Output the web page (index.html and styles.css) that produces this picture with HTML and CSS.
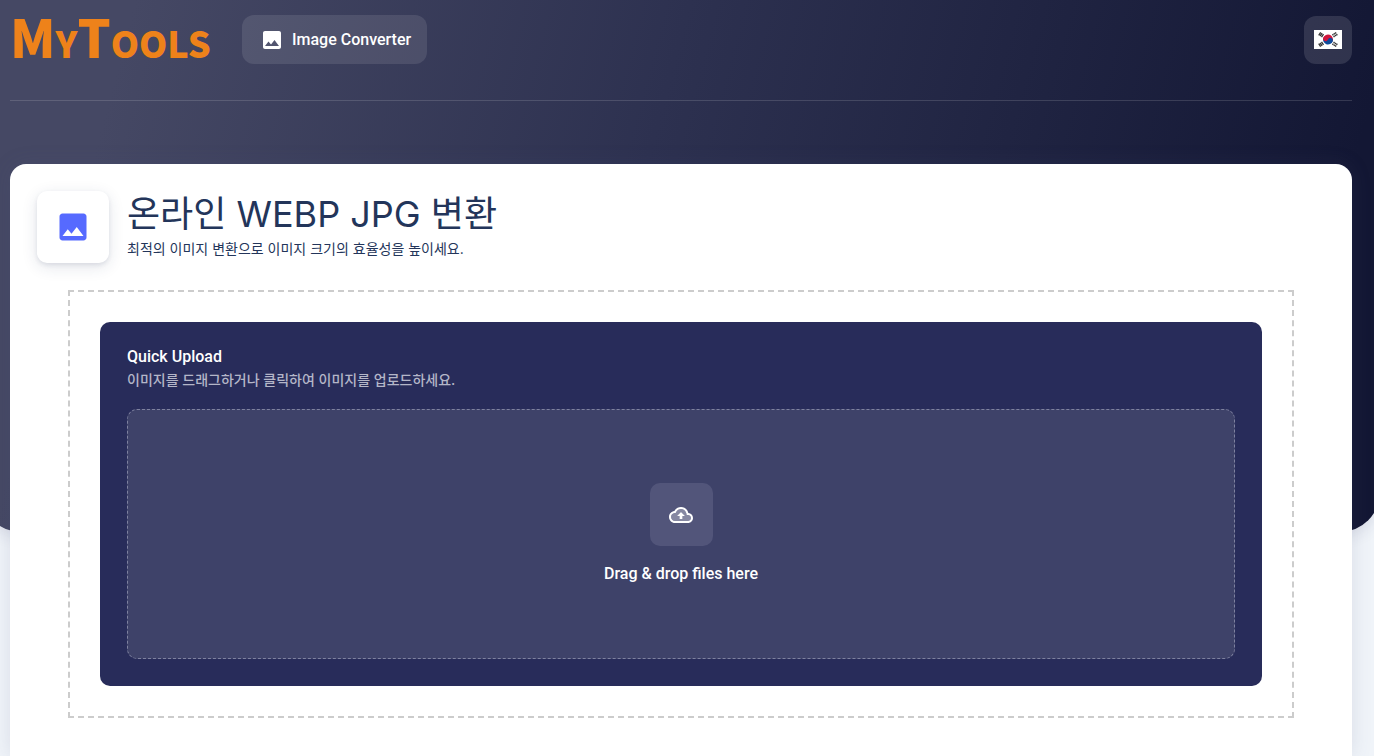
FILE: index.html
```html
<!DOCTYPE html>
<html lang="ko">
<head>
<meta charset="utf-8">
<meta name="viewport" content="width=device-width, initial-scale=1">
<title>MyTools</title>
<link rel="stylesheet" href="styles.css">
</head>
<body>
<div class="backdrop"></div>
<div class="page">
  <header class="topbar">
    <a class="logo" href="#">MyTools</a>
    <nav class="nav">
      <a class="nav-link" href="#">
        <svg class="nav-icon" viewBox="0 0 24 24" aria-hidden="true"><path fill="currentColor" d="M21 19V5c0-1.100-.9-2-2-2H5c-1.100 0-2 .9-2 2v14c0 1.100.9 2 2 2h14c1.100 0 2-.9 2-2zM8.500 13.500l2.500 3.010L14.500 12l4.500 6H5l3.500-4.500z"/></svg>
        Image Converter
      </a>
    </nav>
    <button class="language" type="button" aria-label="한국어">
      <svg class="flag" viewBox="0 0 28 19" aria-hidden="true">
        <path fill="#fff" d="M0 0h28v19H0z"/>
        <g transform="rotate(20 14 9.500)">
          <path fill="#0f4b9b" d="M9 9.500a5 5 0 0 0 10 0z"/>
          <path fill="#d1153c" d="M9 9.500a5 5 0 0 1 10 0z"/>
          <circle cx="11.500" cy="9.500" r="2.500" fill="#d1153c"/>
          <circle cx="16.500" cy="9.500" r="2.500" fill="#0f4b9b"/>
        </g>
        <g stroke="#333" stroke-width="1.300">
          <path d="M4.700 5.300l2-3M6.100 6.200l2-3M7.500 7.100l2-3"/>
          <path d="M23.300 13.700l-2 3M21.900 12.800l-2 3M20.500 11.900l-2 3" stroke-dasharray="1.500 .6"/>
          <path d="M23.300 5.300l-2-3M21.900 6.200l-2-3M20.500 7.100l-2-3" stroke-dasharray="1.500 .6"/>
          <path d="M4.700 13.700l2 3M6.100 12.800l2 3M7.500 11.900l2 3"/>
        </g>
      </svg>
    </button>
  </header>

  <main class="card">
    <div class="intro">
      <div class="intro-icon">
        <svg class="intro-svg" viewBox="0 0 24 24" aria-hidden="true"><path fill="currentColor" d="M21 19V5c0-1.100-.9-2-2-2H5c-1.100 0-2 .9-2 2v14c0 1.100.9 2 2 2h14c1.100 0 2-.9 2-2zM8.500 13.500l2.500 3.010L14.500 12l4.500 6H5l3.500-4.500z"/></svg>
      </div>
      <div>
        <h1 class="title">온라인 WEBP JPG 변환</h1>
        <p class="subtitle">최적의 이미지 변환으로 이미지 크기의 효율성을 높이세요.</p>
      </div>
    </div>
    <div class="upload-frame">
      <section class="upload">
        <h2 class="upload-title">Quick Upload</h2>
        <p class="upload-text">이미지를 드래그하거나 클릭하여 이미지를 업로드하세요.</p>
        <button class="dropzone" type="button">
          <span class="cloud-box">
            <svg class="cloud" viewBox="0 0 24 24" aria-hidden="true"><path fill="currentColor" fill-opacity=".3" d="M19.210 12.040l-1.530-.11-.3-1.500C16.880 7.860 14.620 6 12 6 9.940 6 8.080 7.140 7.120 8.960l-.5.950-1.070.110C3.530 10.240 2 11.950 2 14c0 2.210 1.790 4 4 4h13c1.650 0 3-1.350 3-3 0-1.550-1.220-2.860-2.790-2.960zm-5.760.960v3h-2.910v-3H8l4-4 4 4h-2.550z"/><path fill="currentColor" d="M19.350 10.040C18.670 6.590 15.640 4 12 4 9.110 4 6.610 5.640 5.360 8.040 2.340 8.360 0 10.910 0 14c0 3.310 2.690 6 6 6h13c2.760 0 5-2.240 5-5 0-2.640-2.050-4.780-4.650-4.960zM19 18H6c-2.210 0-4-1.790-4-4 0-2.050 1.530-3.760 3.560-3.970l1.070-.11.5-.95C8.080 7.140 9.940 6 12 6c2.620 0 4.880 1.860 5.390 4.430l.3 1.500 1.530.110c1.560.1 2.780 1.410 2.780 2.960 0 1.650-1.350 3-3 3zM8 13h2.550v3h2.900v-3H16l-4-4z"/></svg>
          </span>
          Drag &amp; drop files here
        </button>
      </section>
    </div>
  </main>
</div>
</body>
</html>
```
FILE: styles.css
```css
* { box-sizing: border-box; }
body {
  margin: 0;
  min-height: 100vh;
  position: relative;
  overflow-x: hidden;
  background: #f0f4f9;
  font-family: Roboto, "Noto Sans CJK KR", sans-serif;
  font-size: 16px;
}
h1, h2, p { margin: 0; }
button { border: 0; padding: 0; font: inherit; color: inherit; cursor: pointer; }
.backdrop {
  position: absolute;
  top: 0;
  left: -19px;
  right: -6px;
  height: 532px;
  border-radius: 0 0 40px 40px;
  background: linear-gradient(105deg, #454864 10%, #2d3150 46%, #131734 92%);
  box-shadow: 0 4px 16px rgba(40, 44, 90, .12);
}
.page {
  position: relative;
  display: flex;
  flex-direction: column;
  min-height: 100vh;
  padding: 0 22px 0 10px;
}
.topbar {
  display: flex;
  align-items: center;
  height: 101px;
  padding-bottom: 21px;
  border-bottom: 1px solid rgba(255, 255, 255, .14);
}
.logo {
  width: 232px;
  padding-bottom: 8px;
  color: #ee821a;
  font-family: "Noto Sans CJK KR", sans-serif;
  font-size: 52px;
  font-weight: 900;
  font-variant: small-caps;
  line-height: 60px;
  text-decoration: none;
}
.nav { flex: 1; }
.nav-link {
  display: inline-flex;
  align-items: center;
  gap: 8px;
  height: 49px;
  padding: 0 16px 0 18px;
  border-radius: 12px;
  background: rgba(255, 255, 255, .1);
  color: #fff;
  font-weight: 500;
  text-decoration: none;
  vertical-align: top;
}
.nav-icon { width: 24px; height: 24px; }
.language {
  display: grid;
  place-items: center;
  width: 48px;
  height: 48px;
  border-radius: 12px;
  background: rgba(255, 255, 255, .12);
}
.flag { width: 28px; height: 19px; }
.card {
  flex: 1;
  margin-top: 63px;
  padding: 27px;
  border-radius: 16px 16px 0 0;
  background: #fff;
  box-shadow: 0 0 20px rgba(80, 85, 130, .15);
}
.intro { display: flex; gap: 18px; color: #23355a; }
.intro-icon {
  display: grid;
  place-items: center;
  width: 72px;
  height: 72px;
  border-radius: 10px;
  background: #fff;
  box-shadow: 0 4px 16px rgba(35, 53, 90, .12), 0 2px 4px rgba(35, 53, 90, .1);
  color: #566aff;
}
.intro-svg { width: 36px; height: 36px; }
.title, .subtitle, .upload-text { font-family: Inter, "Noto Sans CJK KR", sans-serif; }
.title { font-size: 36px; font-weight: 400; line-height: 46px; }
.subtitle { font-size: 14px; line-height: 24px; }
.upload-frame {
  margin: 27px 31px 0;
  padding: 30px;
  border: 2px dashed #ccc;
}
.upload {
  padding: 24px 27px 27px;
  border-radius: 10px;
  background: #282c5a;
  color: #fff;
}
.upload-title { font-size: 16px; font-weight: 500; line-height: 22px; }
.upload-text { color: #b4b6c8; font-size: 14px; font-weight: 500; line-height: 24px; }
.dropzone {
  display: flex;
  flex-direction: column;
  align-items: center;
  justify-content: center;
  gap: 17px;
  width: 100%;
  height: 250px;
  margin-top: 17px;
  border: 1px dashed #7e819f;
  border-radius: 10px;
  background: #3e4269;
  color: #fff;
  font-weight: 500;
  line-height: 22px;
}
.cloud-box {
  display: grid;
  place-items: center;
  width: 63px;
  height: 63px;
  border-radius: 10px;
  background: #52557a;
}
.cloud { width: 24px; height: 24px; }
```
